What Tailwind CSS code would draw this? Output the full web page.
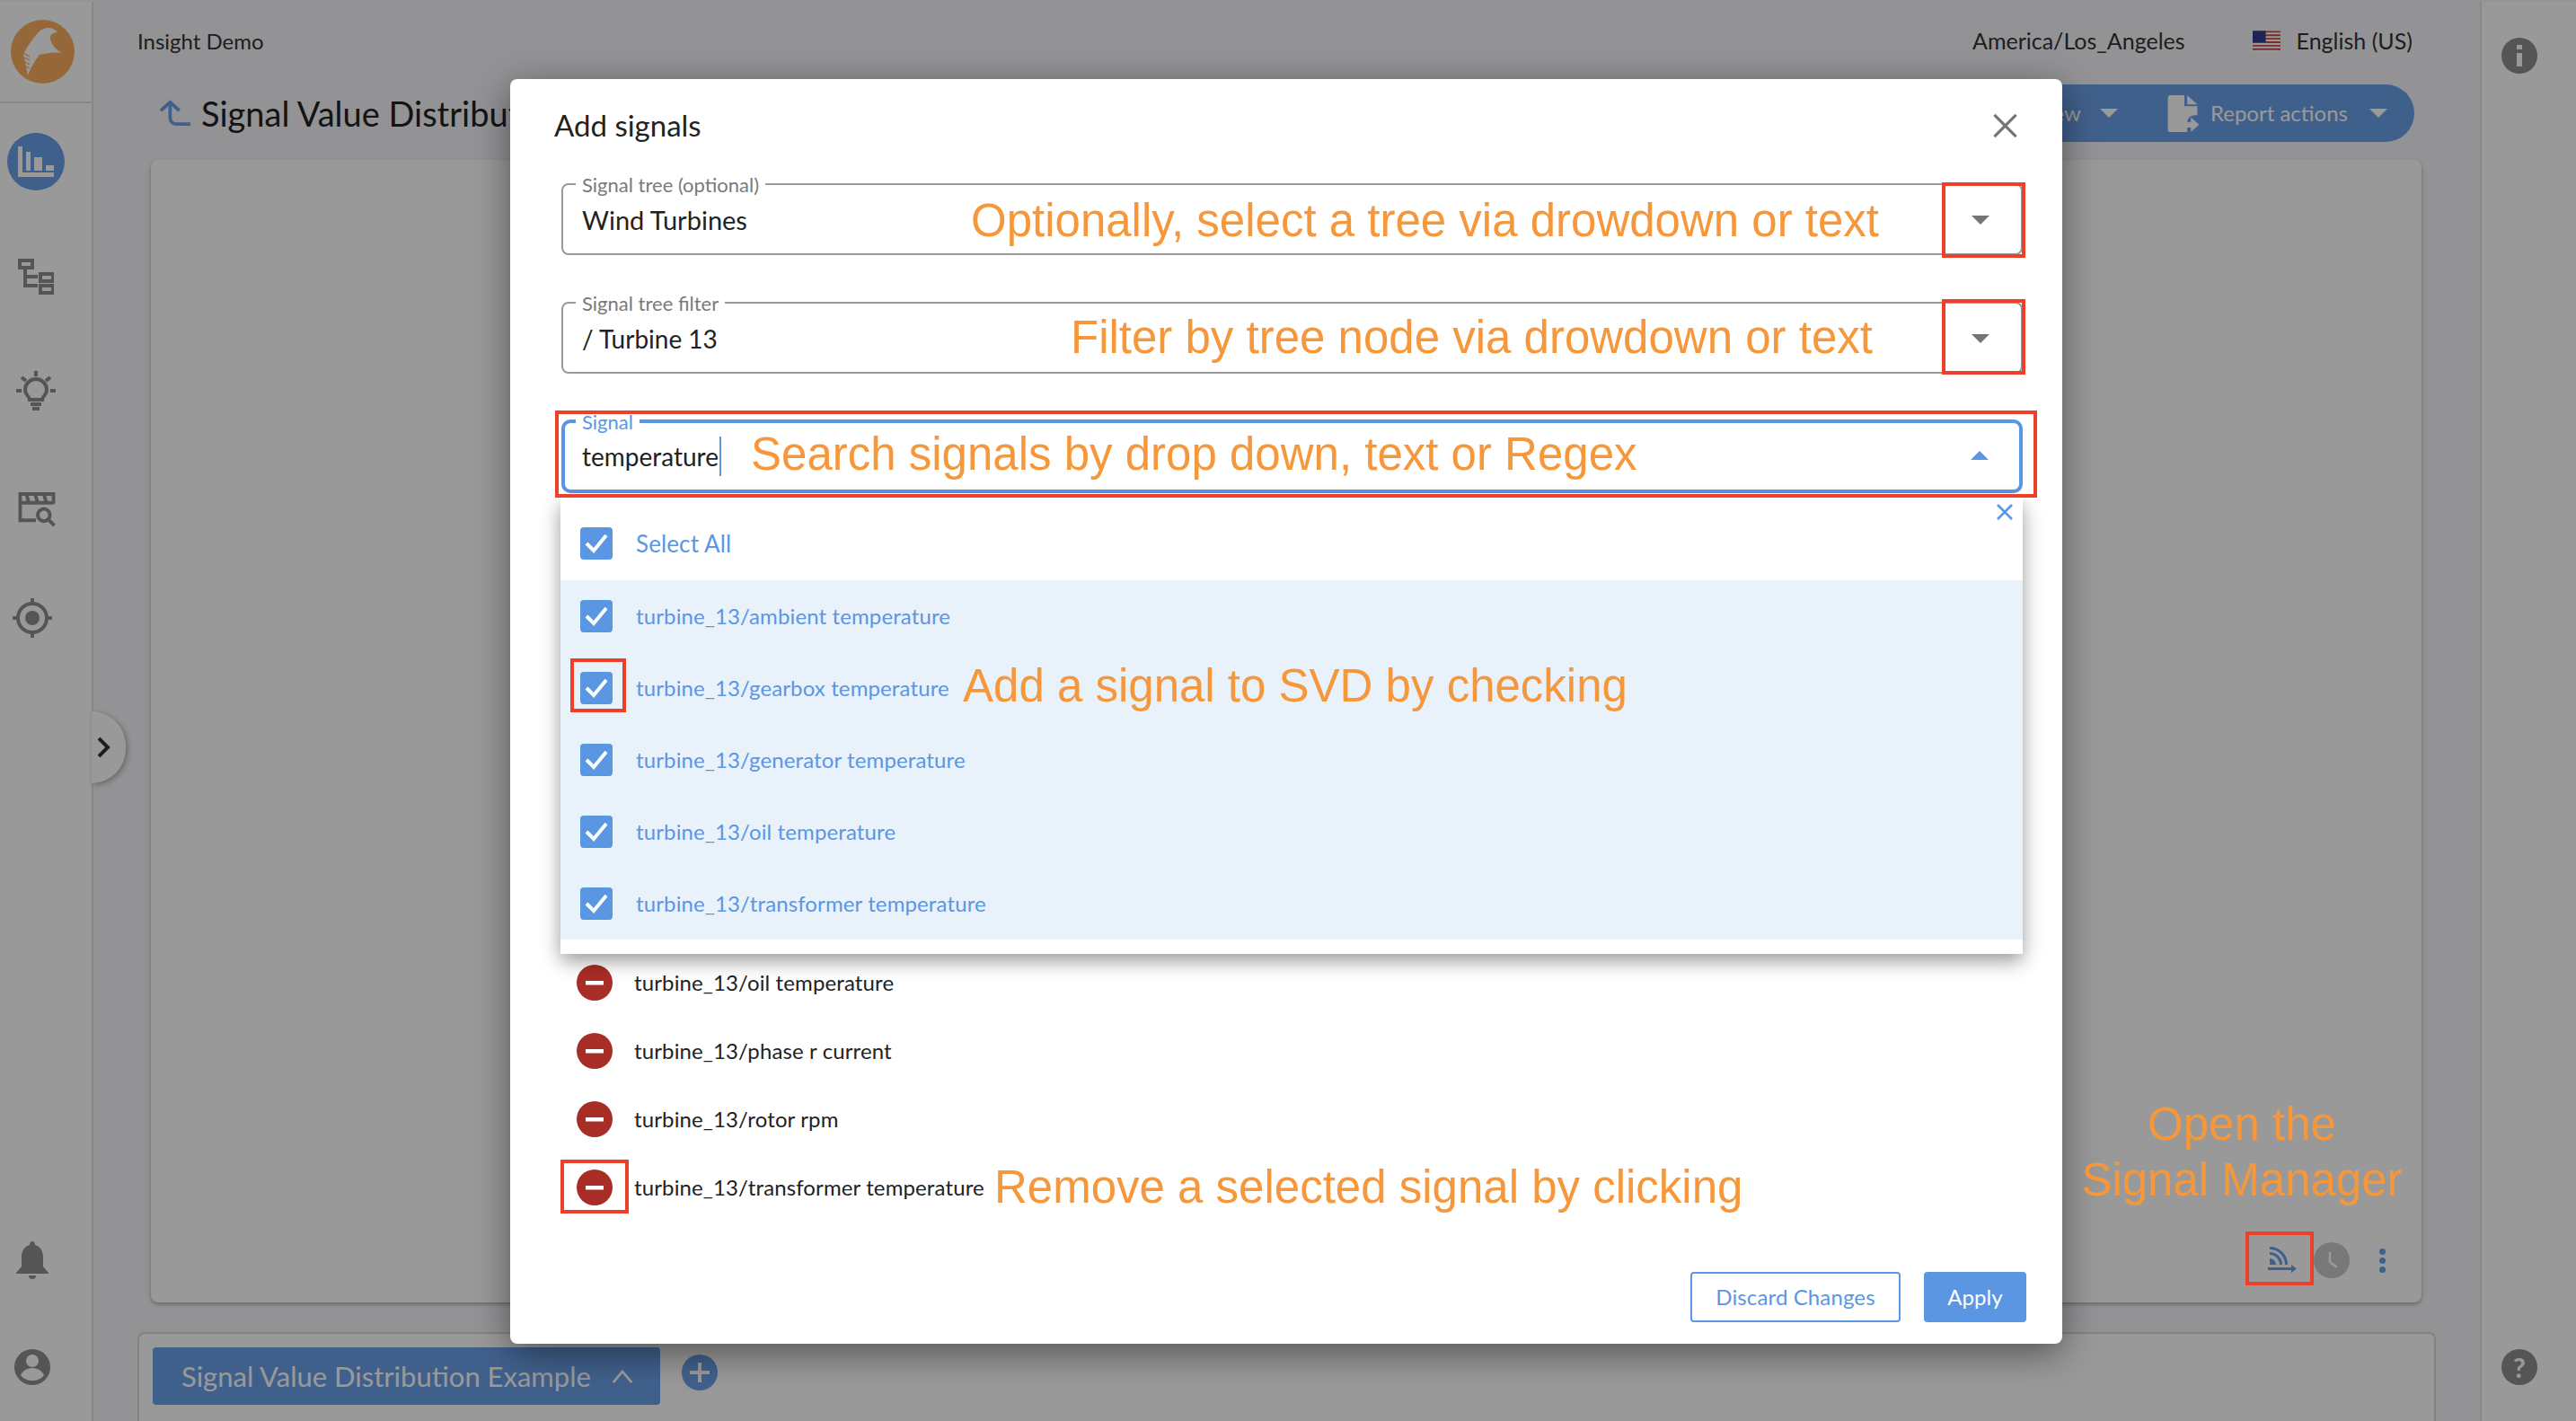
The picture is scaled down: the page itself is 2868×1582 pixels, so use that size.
<!DOCTYPE html>
<html lang="en">
<head>
    <meta charset="UTF-8">
    <title>Add signals</title>
    <script src="https://cdn.jsdelivr.net/npm/@tailwindcss/browser@4"></script>
</head>
<body class="bg-black">
    <div class="relative w-[2868px] h-[1582px] overflow-hidden flex pt-[2px] bg-[#f5f5fa] text-[#222] font-['Lato','Noto_Sans',sans-serif]">
        <!-- Left sidebar -->
        <nav class="relative w-[104px] shrink-0 bg-white border-r-2 border-[#e2e2e2] flex flex-col">
            <div class="h-[113px] border-b-2 border-[#e2e2e2] pl-[12px] pt-[20px]">
                <svg class="w-[71px] h-[71px]" viewBox="0 0 71 71">
                    <circle cx="35.5" cy="35.5" r="35.5" fill="#f8ac5f"/>
                    <path d="M19 62L14 38C18 30 24 22 29 16C33 11 37 9 42 9C46 9 50 11 52 14C47 14 43 17 44 21C45 27 50 33 57 37C48 36 40 37 32 39C27 45 22 54 19 62Z" fill="#fff"/>
                    <path d="M14 37l7 4M15 42l6 3M16 47l5 3M17 52l4 2" stroke="#f8ac5f" stroke-width="1.2"/>
                </svg>
            </div>
            <div class="flex flex-col items-start mt-[33px]">
                <span class="ml-[8px] w-[64px] h-[64px] rounded-full bg-[#6ba0e9] flex items-center justify-center">
                    <svg class="w-[40px] h-[34px]" viewBox="0 0 40 34" fill="#fff"><path d="M0 0h5v29h35v5H0z"/><path d="M9 6h5v21H9zM18 12h9v15h-9zM31 21h9v6h-9z"/></svg>
                </span>
                <svg class="ml-[20px] mt-[76px] w-[40px] h-[40px]" viewBox="0 0 40 40" fill="none" stroke="#8e8e8e" stroke-width="4"><rect x="2" y="2" width="14" height="8"/><path d="M8 10v20h14M8 20h14"/><rect x="25" y="17" width="14" height="8"/><rect x="25" y="30" width="14" height="8"/></svg>
                <svg class="ml-[18px] mt-[85px] w-[44px] h-[45px]" viewBox="0 0 44 45" fill="none" stroke="#8e8e8e" stroke-width="4"><path d="M22 0v6M0 22h6M38 22h6M6 7l5 4M38 7l-5 4"/><path d="M15 32c0-4-5-5-5-11a12 12 0 0 1 24 0c0 6-5 7-5 11z"/><path d="M16 37h12M18 42h8"/></svg>
                <svg class="ml-[20px] mt-[90px] w-[42px] h-[39px]" viewBox="0 0 42 40" fill="none" stroke="#8e8e8e" stroke-width="4"><path d="M20 32H2V2h38v11" /><path d="M2 12h38M9 2l3 10M19 2l3 10M29 2l3 10"/><circle cx="29" cy="26" r="7"/><path d="M34 31l7 7"/></svg>
                <svg class="ml-[14px] mt-[79px] w-[44px] h-[44px]" viewBox="0 0 44 44" fill="none" stroke="#8e8e8e" stroke-width="4"><circle cx="22" cy="22" r="16"/><path d="M22 0v6M22 38v6M0 22h6M38 22h6"/><circle cx="22" cy="22" r="8" fill="#8e8e8e" stroke="none"/></svg>
            </div>
            <div class="mt-auto flex flex-col items-start pb-[40px]">
                <svg class="ml-[17px] w-[38px] h-[42px]" viewBox="0 0 38 42" fill="#8e8e8e"><path d="M19 0c2 0 3 2 3 4 7 2 9 8 9 14v10l6 7v1H1v-1l6-7V18C7 12 9 6 16 4c0-2 1-4 3-4zM15 38h8c0 3-2 4-4 4s-4-1-4-4z"/></svg>
                <svg class="ml-[16px] mt-[78px] w-[40px] h-[40px]" viewBox="0 0 40 40"><circle cx="20" cy="20" r="20" fill="#8e8e8e"/><circle cx="20" cy="13" r="7" fill="#fff"/><path d="M7 29c3-6 8-8 13-8s10 2 13 8c-3 4-8 6-13 6s-10-2-13-6z" fill="#fff"/></svg>
            </div>
            <!-- expander -->
            <div class="absolute left-[102px] top-[790px] w-[38px] h-[80px] rounded-r-full bg-white shadow-[2px_2px_6px_rgba(0,0,0,0.3)] flex items-center justify-start pl-[6px]">
                <svg class="w-[15px] h-[24px]" viewBox="0 0 15 24" fill="none" stroke="#333" stroke-width="4"><path d="M2 2l10 10L2 22"/></svg>
            </div>
        </nav>

        <!-- Main column -->
        <main class="flex-1 min-w-0 flex flex-col pl-[49px] pr-[51px]">
            <header class="h-[44px] mt-[22px] flex items-center justify-between text-[24px] text-[#333]">
                <span>Insight Demo</span>
                <div class="flex items-center text-[25px]">
                    <span>America/Los_Angeles</span>
                    <svg class="ml-[75px] w-[31px] h-[24px]" viewBox="0 0 32 24">
                        <rect width="32" height="24" fill="#fff"/>
                        <path d="M0 1h32M0 5h32M0 9h32M0 13h32M0 17h32M0 21h32" stroke="#c94a4a" stroke-width="2"/>
                        <rect width="15" height="13" fill="#2f3f8f"/>
                    </svg>
                    <span class="ml-[18px] mr-[24px]">English (US)</span>
                </div>
            </header>
            <div class="h-[64px] mt-[26px] flex items-center justify-between ml-[25px]">
                <div class="flex items-center">
                    <svg class="w-[34px] h-[30px]" viewBox="0 0 36 32" fill="none" stroke="#6ba0e9" stroke-width="4"><path d="M36 29H20c-5 0-8-3-8-8V3"/><path d="M1 13L12 3l11 10"/></svg>
                    <!-- the modal covers the rest of this title -->
                    <span class="ml-[12px] w-[350px] overflow-hidden text-[38px] leading-[44px] whitespace-nowrap">Signal Value Distribution Example</span>
                </div>
                <div class="mr-[22px] h-[64px] rounded-full bg-[#6ba0e9] text-white flex items-center pr-[30px] text-[24px]">
                    <span class="pl-[40px]">View</span>
                    <svg class="ml-[21px] w-[20px] h-[10px]" viewBox="0 0 20 10" fill="#fff"><path d="M0 0h20L10 10z"/></svg>
                    <svg class="ml-[54px] w-[38px] h-[41px]" viewBox="0 0 34 40" fill="#fff"><path d="M3 0h15v12h14v10c-6-1-11 2-11 8v10H3a3 3 0 0 1-3-3V3a3 3 0 0 1 3-3zM21 0l11 10H21zM25 24l9 8-9 8v-5h-6v-6h6z"/></svg>
                    <span class="ml-[11px]">Report actions</span>
                    <svg class="ml-[24px] w-[20px] h-[10px]" viewBox="0 0 20 10" fill="#fff"><path d="M0 0h20L10 10z"/></svg>
                </div>
            </div>
            <section class="relative mt-[20px] ml-[15px] mr-[14px] h-[1272px] shrink-0 bg-white rounded-[8px] shadow-[0_2px_4px_rgba(0,0,0,0.3)]">
                <div class="absolute right-[40px] bottom-[27px] flex items-center">
                    <svg class="w-[32px] h-[30px]" viewBox="0 0 32 30" fill="none" stroke="#6ba0e9" stroke-width="3"><path d="M2 1.5A18.5 18.5 0 0 1 20.500 20M2 7.500A12.500 12.500 0 0 1 14.500 20"/><path d="M2 13a7 7 0 0 1 7 7H2z" fill="#6ba0e9" stroke="none"/><path d="M0 24.500h28"/><path d="M26 20l6 4.500-6 4.500z" fill="#6ba0e9" stroke="none"/></svg>
                    <span class="ml-[19px] w-[40px] h-[40px] rounded-full bg-[#c8c8c8] flex items-center justify-center">
                        <svg class="w-[24px] h-[24px]" viewBox="0 0 24 24" fill="none" stroke="#fff" stroke-width="2.5"><path d="M10 3v11l8 6"/></svg>
                    </span>
                    <span class="ml-[33px] flex flex-col gap-[3px]">
                        <i class="block w-[7px] h-[7px] rounded-full bg-[#6ba0e9]"></i>
                        <i class="block w-[7px] h-[7px] rounded-full bg-[#6ba0e9]"></i>
                        <i class="block w-[7px] h-[7px] rounded-full bg-[#6ba0e9]"></i>
                    </span>
                </div>
            </section>
            <footer class="relative mt-[33px] mr-[-2px] flex-1 bg-white border-2 border-b-0 border-[#d9d9d9] rounded-t-[8px] pl-[15px] pt-[15px] flex items-start">
                <div class="w-[565px] h-[64px] rounded-[4px] bg-[#6ba0e9] text-white text-[31px] flex items-center pl-[32px] whitespace-nowrap">
                    <span>Signal Value Distribution Example</span>
                    <svg class="ml-[22px] w-[26px] h-[15px]" viewBox="0 0 26 16" fill="none" stroke="#fff" stroke-width="3"><path d="M2 15L13 2l11 13"/></svg>
                </div>
                <span class="ml-[24px] mt-[8px] w-[40px] h-[40px] rounded-full bg-[#6ba0e9] flex items-center justify-center">
                    <svg class="w-[24px] h-[24px]" viewBox="0 0 24 24" fill="none" stroke="#fff" stroke-width="4"><path d="M12 1v22M1 12h22"/></svg>
                </span>
            </footer>
        </main>

        <!-- Right sidebar -->
        <aside class="w-[107px] shrink-0 bg-white border-l-2 border-[#e2e2e2] flex flex-col justify-between pl-[22px] pt-[40px] pb-[40px]">
            <span class="w-[40px] h-[40px] rounded-full bg-[#8e8e8e] flex items-center justify-center">
                <svg class="w-[8px] h-[24px]" viewBox="0 0 8 24" fill="#fff"><rect x="1" y="0" width="6" height="5"/><rect x="1" y="9" width="6" height="15"/></svg>
            </span>
            <span class="w-[40px] h-[40px] rounded-full bg-[#8e8e8e] flex items-center justify-center text-white font-bold text-[30px] leading-none">?</span>
        </aside>

        <!-- Backdrop -->
        <div class="absolute inset-0 bg-black/40"></div>

        <!-- Modal -->
        <div class="absolute left-[568px] top-[88px] w-[1728px] h-[1408px] bg-white rounded-[8px] shadow-[0_10px_40px_rgba(0,0,0,0.45)] pl-[57px] pr-[44px] text-[#222]">
            <div class="flex items-center justify-between h-[104px]">
                <h2 class="-ml-[8px] text-[33px]">Add signals</h2>
                <svg class="mr-[6px] w-[27px] h-[26px]" viewBox="0 0 28 28" stroke="#757575" stroke-width="3.5"><path d="M1 1l26 26M27 1L1 27"/></svg>
            </div>

            <!-- Signal tree -->
            <div class="relative mt-[12px] h-[80px] border-2 border-[#9a9a9a] rounded-[8px] flex items-center pl-[21px]">
                <span class="absolute left-[14px] -top-[12px] bg-white px-[7px] text-[22px] leading-[24px] text-[#7a7a7a]">Signal tree (optional)</span>
                <span class="text-[29px] mt-[2px]">Wind Turbines</span>
                <svg class="absolute right-[35px] top-[34px] w-[20px] h-[10px]" viewBox="0 0 20 10" fill="#757575"><path d="M0 0h20L10 10z"/></svg>
            </div>
            <!-- Signal tree filter -->
            <div class="relative mt-[52px] h-[80px] border-2 border-[#9a9a9a] rounded-[8px] flex items-center pl-[21px]">
                <span class="absolute left-[14px] -top-[12px] bg-white px-[7px] text-[22px] leading-[24px] text-[#7a7a7a]">Signal tree filter</span>
                <span class="text-[28px] mt-[2px]">/ Turbine 13</span>
                <svg class="absolute right-[35px] top-[34px] w-[20px] h-[10px]" viewBox="0 0 20 10" fill="#757575"><path d="M0 0h20L10 10z"/></svg>
            </div>
            <!-- Signal -->
            <div class="relative mt-[51px] h-[82px] border-4 border-[#5b96e3] rounded-[10px] flex items-center pl-[19px]">
                <span class="absolute left-[12px] -top-[13px] bg-white px-[7px] text-[22px] leading-[24px] text-[#5b96e3]">Signal</span>
                <span class="text-[28px] border-r-2 border-[#5b96e3] leading-[44px] pr-[1px]">temperature</span>
                <svg class="absolute right-[34px] top-[31px] w-[20px] h-[10px]" viewBox="0 0 20 10" fill="#5b96e3"><path d="M0 10h20L10 0z"/></svg>
            </div>

            <!-- Selected signals -->
            <ul class="absolute left-[74px] top-[986px] flex flex-col gap-[36px] text-[24px] leading-[40px] tracking-[0.12px]">
                <li class="flex items-center gap-[24px]"><svg class="w-[40px] h-[40px]" viewBox="0 0 40 40"><circle cx="20" cy="20" r="20" fill="#a82d26"/><rect x="10" y="18" width="20" height="4.500" fill="#fff"/></svg>turbine_13/oil temperature</li>
                <li class="flex items-center gap-[24px]"><svg class="w-[40px] h-[40px]" viewBox="0 0 40 40"><circle cx="20" cy="20" r="20" fill="#a82d26"/><rect x="10" y="18" width="20" height="4.500" fill="#fff"/></svg>turbine_13/phase r current</li>
                <li class="flex items-center gap-[24px]"><svg class="w-[40px] h-[40px]" viewBox="0 0 40 40"><circle cx="20" cy="20" r="20" fill="#a82d26"/><rect x="10" y="18" width="20" height="4.500" fill="#fff"/></svg>turbine_13/rotor rpm</li>
                <li class="flex items-center gap-[24px]"><svg class="w-[40px] h-[40px]" viewBox="0 0 40 40"><circle cx="20" cy="20" r="20" fill="#a82d26"/><rect x="10" y="18" width="20" height="4.500" fill="#fff"/></svg>turbine_13/transformer temperature</li>
            </ul>

            <!-- Dropdown list -->
            <div class="absolute left-[56px] top-[466px] w-[1628px] h-[508px] bg-white shadow-[0_8px_20px_rgba(0,0,0,0.4)] text-[24px] tracking-[0.12px] text-[#5b96e3]">
                <svg class="absolute right-[11px] top-[7px] w-[18px] h-[18px]" viewBox="0 0 18 18" stroke="#5b96e3" stroke-width="2.5"><path d="M1 1l16 16M17 1L1 17"/></svg>
                <div class="h-[92px] flex items-center pl-[22px] pt-[10px] gap-[26px] text-[26px]">
                    <span class="w-[36px] h-[36px] rounded-[4px] bg-[#5b96e3] flex items-center justify-center"><svg class="w-[26px] h-[22px]" viewBox="0 0 26 22" fill="none" stroke="#fff" stroke-width="4"><path d="M2 11l8 8L24 2"/></svg></span>
                    Select All
                </div>
                <div class="bg-[#e9f1fb]">
                    <div class="h-[80px] flex items-center pl-[22px] gap-[26px]">
                        <span class="w-[36px] h-[36px] rounded-[4px] bg-[#5b96e3] flex items-center justify-center"><svg class="w-[26px] h-[22px]" viewBox="0 0 26 22" fill="none" stroke="#fff" stroke-width="4"><path d="M2 11l8 8L24 2"/></svg></span>
                        turbine_13/ambient temperature
                    </div>
                    <div class="h-[80px] flex items-center pl-[22px] gap-[26px]">
                        <span class="w-[36px] h-[36px] rounded-[4px] bg-[#5b96e3] flex items-center justify-center"><svg class="w-[26px] h-[22px]" viewBox="0 0 26 22" fill="none" stroke="#fff" stroke-width="4"><path d="M2 11l8 8L24 2"/></svg></span>
                        turbine_13/gearbox temperature
                    </div>
                    <div class="h-[80px] flex items-center pl-[22px] gap-[26px]">
                        <span class="w-[36px] h-[36px] rounded-[4px] bg-[#5b96e3] flex items-center justify-center"><svg class="w-[26px] h-[22px]" viewBox="0 0 26 22" fill="none" stroke="#fff" stroke-width="4"><path d="M2 11l8 8L24 2"/></svg></span>
                        turbine_13/generator temperature
                    </div>
                    <div class="h-[80px] flex items-center pl-[22px] gap-[26px]">
                        <span class="w-[36px] h-[36px] rounded-[4px] bg-[#5b96e3] flex items-center justify-center"><svg class="w-[26px] h-[22px]" viewBox="0 0 26 22" fill="none" stroke="#fff" stroke-width="4"><path d="M2 11l8 8L24 2"/></svg></span>
                        turbine_13/oil temperature
                    </div>
                    <div class="h-[80px] flex items-center pl-[22px] gap-[26px]">
                        <span class="w-[36px] h-[36px] rounded-[4px] bg-[#5b96e3] flex items-center justify-center"><svg class="w-[26px] h-[22px]" viewBox="0 0 26 22" fill="none" stroke="#fff" stroke-width="4"><path d="M2 11l8 8L24 2"/></svg></span>
                        turbine_13/transformer temperature
                    </div>
                </div>
            </div>

            <!-- Actions -->
            <div class="absolute right-[40px] top-[1328px] flex gap-[26px] text-[24px] tracking-[0.12px]">
                <button class="w-[234px] h-[56px] border-2 border-[#5b96e3] rounded-[4px] text-[#5b96e3]">Discard Changes</button>
                <button class="w-[114px] h-[56px] bg-[#5b96e3] rounded-[4px] text-white">Apply</button>
            </div>
        </div>

        <!-- Tutorial annotations drawn over the app -->
        <div class="absolute inset-0 pointer-events-none text-[51px] leading-[60px] text-[#f5973a] font-['Liberation_Sans',sans-serif] whitespace-nowrap">
            <span class="absolute left-[1081px] top-[216px]">Optionally, select a tree via drowdown or text</span>
            <span class="absolute left-[1192px] top-[346px]">Filter by tree node via drowdown or text</span>
            <span class="absolute left-[836px] top-[476px]">Search signals by drop down, text or Regex</span>
            <span class="absolute left-[1072px] top-[734px]">Add a signal to SVD by checking</span>
            <span class="absolute left-[1107px] top-[1292px]">Remove a selected signal by clicking</span>
            <span class="absolute left-[2312px] top-[1221px] w-[368px] text-center leading-[62px]">Open the<br>Signal Manager</span>

            <i class="absolute left-[2162px] top-[203px] w-[93px] h-[84px] border-4 border-[#ee4028]"></i>
            <i class="absolute left-[2162px] top-[333px] w-[93px] h-[84px] border-4 border-[#ee4028]"></i>
            <i class="absolute left-[618px] top-[457px] w-[1650px] h-[97px] border-4 border-[#ee4028]"></i>
            <i class="absolute left-[635px] top-[733px] w-[62px] h-[60px] border-4 border-[#ee4028]"></i>
            <i class="absolute left-[624px] top-[1291px] w-[76px] h-[60px] border-4 border-[#ee4028]"></i>
            <i class="absolute left-[2500px] top-[1371px] w-[76px] h-[60px] border-4 border-[#ee4028]"></i>
        </div>
    </div>
</body>
</html>
